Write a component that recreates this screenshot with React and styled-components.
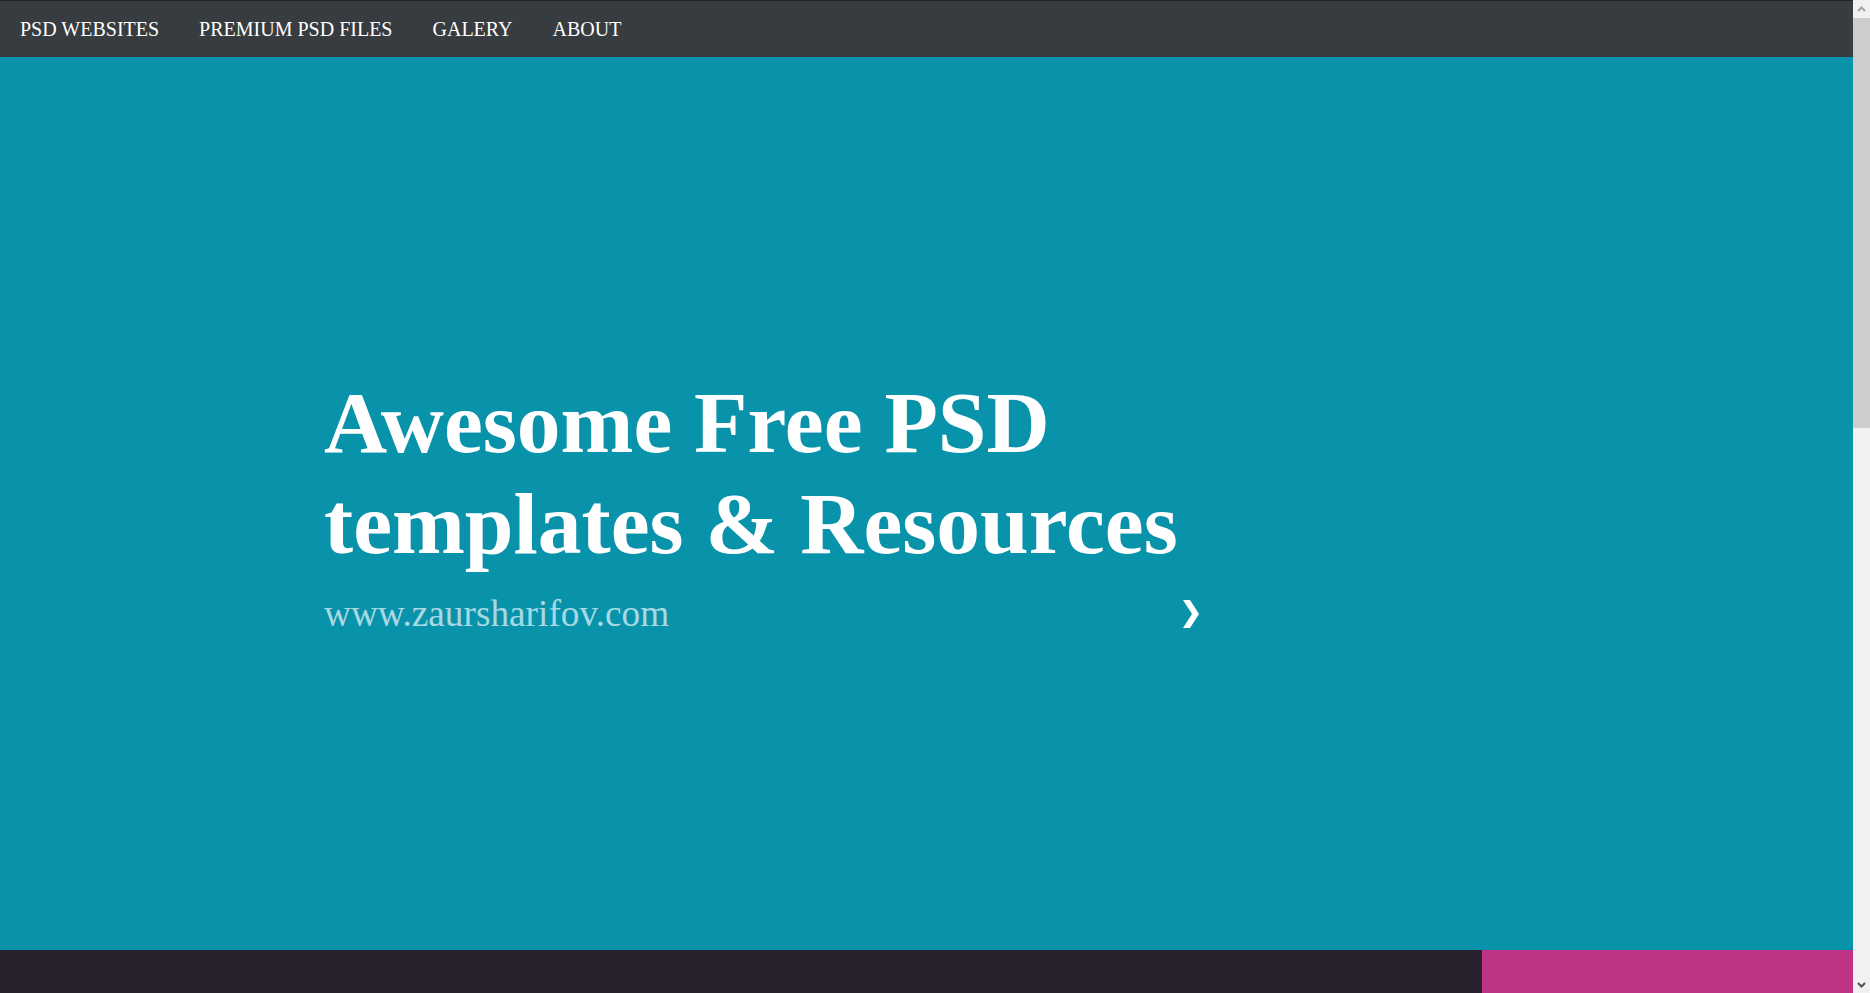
import React from "react";
import styled, { createGlobalStyle } from "styled-components";

const Global = createGlobalStyle`
  html, body { margin: 0; padding: 0; }
  body { font-family: "Liberation Serif", "Times New Roman", serif; background: #27222d; }
  * { box-sizing: border-box; }
`;

const Frame = styled.div`
  display: grid;
  grid-template-columns: 1fr 17px;
  align-items: start;
`;

const Page = styled.main`
  min-width: 0;
`;

const ScrollBar = styled.aside`
  position: sticky;
  top: 0;
  height: 100vh;
  background: #f1f1f1;
  display: flex;
  flex-direction: column;
`;

const ScrollButton = styled.div`
  height: 17px;
  display: flex;
  align-items: center;
  justify-content: center;
  flex: none;
`;

const Thumb = styled.div`
  height: 410px;
  background: #cdcdcd;
  flex: none;
  margin-top: 1px;
`;

const Track = styled.div`
  flex: 1;
`;

const Nav = styled.nav`
  height: 57px;
  background: #373c40;
  border-top: 1px solid #1f2326;
  display: flex;
  align-items: center;
`;

const NavLink = styled.a`
  color: #ffffff;
  font-family: "Liberation Serif", "Times New Roman", serif;
  font-size: 20px;
  text-decoration: none;
  text-transform: uppercase;
  padding: 0 20px;
  line-height: 56px;
`;

const Hero = styled.section`
  height: 893px;
  background: #0993ab;
  display: flex;
  flex-direction: column;
  justify-content: center;
  padding-left: 324px;
`;

const Content = styled.div`
  width: 876px;
`;

const Title = styled.h1`
  margin: 0;
  color: #ffffff;
  font-family: "Liberation Serif", "Times New Roman", serif;
  font-weight: 700;
  font-size: 87.5px;
  line-height: 101px;
`;

const SubRow = styled.div`
  display: flex;
  align-items: center;
  justify-content: space-between;
  margin-top: 18px;
`;

const Sub = styled.a`
  color: #a6d9e2;
  font-family: "Liberation Serif", "Times New Roman", serif;
  font-size: 37.3px;
  text-decoration: none;
  line-height: 43px;
`;

const Arrow = styled.a`
  display: flex;
  width: 17px;
  height: 28px;
`;

const Lower = styled.section`
  display: grid;
  grid-template-columns: 80% 20%;
  height: 1378px;
`;

const Dark = styled.div`
  background: #27222d;
`;

const Pink = styled.div`
  background: #bd3385;
`;

export default function App() {
  return (
    <>
      <Global />
      <Frame>
        <Page>
          <Nav>
            <NavLink href="#">PSD Websites</NavLink>
            <NavLink href="#">Premium PSD Files</NavLink>
            <NavLink href="#">Galery</NavLink>
            <NavLink href="#">About</NavLink>
          </Nav>
          <Hero>
            <Content>
              <Title>Awesome Free PSD templates &amp; Resources</Title>
              <SubRow>
                <Sub href="#">www.zaursharifov.com</Sub>
                <Arrow href="#">
                  <svg width="17" height="28" viewBox="0 0 17 28">
                    <polygon points="0,0 7,0 16,14 7,28 0,28 9,14" fill="#ffffff" />
                  </svg>
                </Arrow>
              </SubRow>
            </Content>
          </Hero>
          <Lower>
            <Dark />
            <Pink />
          </Lower>
        </Page>
        <ScrollBar>
          <ScrollButton>
            <svg width="9" height="6" viewBox="0 0 9 6">
              <path d="M1 5 L4.5 1.5 L8 5" fill="none" stroke="#a3a3a3" strokeWidth="2" />
            </svg>
          </ScrollButton>
          <Thumb />
          <Track />
          <ScrollButton>
            <svg width="9" height="6" viewBox="0 0 9 6">
              <path d="M1 1 L4.5 4.5 L8 1" fill="none" stroke="#505050" strokeWidth="2" />
            </svg>
          </ScrollButton>
        </ScrollBar>
      </Frame>
    </>
  );
}
